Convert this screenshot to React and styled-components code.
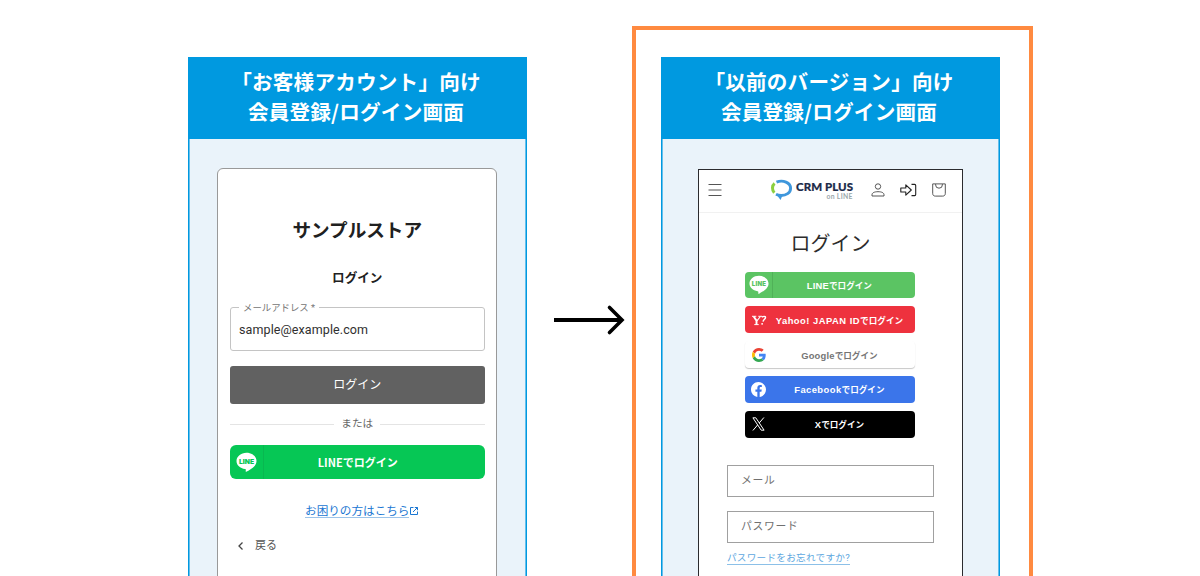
import React from "react";
import styled, { createGlobalStyle } from "styled-components";

const GlobalStyle = createGlobalStyle`
  * {
    box-sizing: border-box;
  }
  body {
    margin: 0;
    background: #ffffff;
    font-family: Roboto, "Noto Sans CJK JP", sans-serif;
  }
`;

const Stage = styled.main`
  display: flex;
  align-items: flex-start;
  width: 1200px;
  height: 576px;
  padding-left: 188px;
  overflow: hidden;
`;

const Panel = styled.section`
  flex: none;
  width: 339px;
  height: 560px;
  margin-top: ${(props) => props.$top}px;
`;

const PanelHeader = styled.h2`
  height: 82px;
  margin: 0;
  padding: 9px 3px 0 0;
  background: #0099e0;
  color: #ffffff;
  font-family: "Noto Sans CJK JP", sans-serif;
  font-size: 20.6px;
  font-weight: 700;
  line-height: 30px;
  letter-spacing: 0.2px;
  text-align: center;
  white-space: nowrap;
`;

const PanelLine = styled.span`
  display: block;
`;

const PanelBody = styled.div`
  display: flex;
  height: 478px;
  padding: ${(props) => props.$padding};
  background: #eaf3fa;
  border: solid #0099e0;
  border-width: 0 1px;
  box-shadow: inset 1px 0 #66bfeb, inset -1px 0 #66bfeb;
`;

const Frame = styled.div`
  flex: none;
  width: 401px;
  height: 620px;
  margin-top: 26px;
  padding-left: 25px;
  border: 4px solid #ff8a40;
`;

const ArrowSlot = styled.div`
  flex: none;
  width: 105px;
  padding: 304px 0 0 27px;
  svg {
    display: block;
  }
`;

/* customer account card */

const AccountCard = styled.div`
  display: flex;
  flex-direction: column;
  width: 280px;
  height: 450px;
  padding: 0 11.5px 0 12px;
  background: #ffffff;
  border: 1px solid #999999;
  border-radius: 6px;
`;

const StoreName = styled.h1`
  margin: 47px 0 0;
  color: #202020;
  font-size: 18.6px;
  font-weight: 700;
  line-height: 30px;
  text-align: center;
`;

const AccountTitle = styled.h3`
  margin: 22px 0 0;
  color: #202020;
  font-size: 12.6px;
  font-weight: 700;
  line-height: 20px;
  text-align: center;
`;

const Field = styled.fieldset`
  height: 50px;
  margin: 13px 0 0;
  padding: 0 8px;
  border: 1px solid #c4c4c4;
  border-radius: 3px;
  min-width: 0;
`;

const FieldLabel = styled.legend`
  padding: 1px 4px 0;
  height: 12px;
  color: #757575;
  font-size: 9.4px;
  line-height: 12px;
`;

const FieldValue = styled.div`
  margin-top: 7px;
  color: #303030;
  font-size: 12.5px;
  line-height: 20px;
  letter-spacing: 0.1px;
`;

const SubmitButton = styled.button`
  flex: none;
  height: 38px;
  margin-top: 15px;
  padding: 0 0 3px;
  background: #616161;
  border: 0;
  border-radius: 3px;
  color: #ffffff;
  font: 400 12px Roboto, "Noto Sans CJK JP", sans-serif;
`;

const Divider = styled.div`
  display: flex;
  align-items: center;
  gap: 7px;
  height: 16px;
  margin-top: 12px;
  color: #666666;
  font-size: 10.6px;
  line-height: 18px;
  &::before,
  &::after {
    content: "";
    flex: 1;
    height: 1px;
    background: #e4e4e4;
  }
`;

const LineButton = styled.button`
  display: flex;
  flex: none;
  align-items: center;
  height: 34px;
  margin-top: 13px;
  padding: 0;
  background: #06c755;
  border: 0;
  border-radius: 6px;
  color: #ffffff;
  font: 700 11px "Noto Sans CJK JP", sans-serif;
`;

const IconCell = styled.span`
  display: flex;
  flex: none;
  align-items: center;
  justify-content: center;
  width: ${(props) => props.$width}px;
  height: 100%;
  border-right: 1px solid ${(props) => props.$rule || "transparent"};
`;

const ButtonText = styled.span`
  flex: 1;
  padding-right: ${(props) => props.$right || 0}px;
  text-align: center;
  white-space: nowrap;
`;

const Kana = styled.span`
  font-size: 8.6px;
  letter-spacing: 0;
`;

const HelpLink = styled.a`
  display: flex;
  align-items: center;
  justify-content: center;
  margin-top: 24px;
  padding-left: 10px;
  color: #1976d2;
  line-height: 16px;
  font-size: 11.6px;
`;

const HelpText = styled.span`
  height: 15px;
  line-height: 17px;
  border-bottom: 1px solid #9cc4ea;
`;

const BackLink = styled.a`
  display: flex;
  align-items: center;
  gap: 10px;
  margin-top: 18px;
  padding-left: 7px;
  color: #555555;
  font-size: 11px;
  line-height: 20px;
`;

/* classic storefront card */

const StoreCard = styled.div`
  width: 265px;
  height: 450px;
  background: #ffffff;
  border: 1px solid #2b2b2e;
`;

const StoreBar = styled.header`
  display: flex;
  align-items: center;
  height: 43px;
  padding: 0 16px 3px 9px;
  border-bottom: 1px solid #f1f1f1;
`;

const Brand = styled.div`
  display: flex;
  margin: 1px 0 0 48px;
`;

const BarIcons = styled.div`
  display: flex;
  align-items: center;
  justify-content: space-between;
  width: 75px;
  margin-left: auto;
`;

const LoginTitle = styled.h1`
  margin: 14px 0 0;
  color: #2c2c2c;
  font-family: "Noto Sans CJK JP", sans-serif;
  font-size: 20px;
  font-weight: 400;
  line-height: 32px;
  text-align: center;
`;

const SocialList = styled.div`
  display: flex;
  flex-direction: column;
  gap: 8.4px;
  width: 170px;
  margin: 12.5px 0 0 46.4px;
`;

const SocialButton = styled.button`
  display: flex;
  align-items: center;
  height: 26.5px;
  padding: 0;
  background: ${(props) => props.$bg};
  border: 0;
  border-radius: 4px;
  box-shadow: ${(props) => props.$shadow || "none"};
  color: ${(props) => props.$color || "#ffffff"};
  font: 700 9.4px "Liberation Sans", "Noto Sans CJK JP", sans-serif;
  letter-spacing: ${(props) => props.$tracking || 0.2}px;
`;

const StoreForm = styled.form`
  display: flex;
  flex-direction: column;
  align-items: flex-start;
  gap: 14px;
  margin: 27px 0 0 28px;
`;

const StoreField = styled.div`
  width: 207px;
  height: 32px;
  padding-left: 13px;
  border: 1px solid #a0a0a0;
  color: #707070;
  font-size: 10.8px;
  line-height: 30px;
  letter-spacing: 0.7px;
`;

const ForgotLink = styled.a`
  height: 15px;
  margin-top: -7px;
  border-bottom: 1px solid #8cc0e8;
  color: #5da7e0;
  font-size: 9.6px;
  line-height: 15px;
  letter-spacing: 0.28px;
`;

function LineIcon({ size, color }) {
  return (
    <svg width={size} height={size} viewBox="0 0 21 21">
      <path
        d="M10.5 .8C4.900 .8.5 4.500.5 9c0 4.100 3.600 7.400 8.500 8.100.9.200.9.500.7 2-.1.700.3.900 1 .5 1.700-.9 6-3.500 7.900-5.700C19.900 12.500 20.500 10.800 20.500 9 20.500 4.500 16.100.8 10.500.8z"
        fill="#ffffff"
      />
      <text
        x="10.5"
        y="11.500"
        textAnchor="middle"
        fontFamily="Inter, sans-serif"
        fontSize="6.600"
        fontWeight="900"
        textLength="15"
        lengthAdjust="spacingAndGlyphs"
        fill={color}
      >
        LINE
      </text>
    </svg>
  );
}

function YahooIcon() {
  return (
    <svg width="18" height="14" viewBox="0 0 18 14" fill="none" stroke="#ffffff">
      <path d="M2 3.300h4.300M8.300 3.300h3.700M4.300 11.600h4.400" strokeWidth="1" />
      <path d="M3.700 3.500 6.500 7.600v4" strokeWidth="1.900" />
      <path d="M10.400 3.500 6.900 7.800" strokeWidth="1.100" />
      <path d="M12 4.400c.8-1.300 3.600-1.500 3.500.2-.1 1.500-2 1.800-2.500 4" strokeWidth="1.400" />
      <path d="M12.300 10.200l-.3 1.500" strokeWidth="1.600" />
    </svg>
  );
}

function GoogleIcon() {
  return (
    <svg width="14" height="14" viewBox="0 0 48 48">
      <path
        fill="#EA4335"
        d="M24 9.500c3.540 0 6.710 1.220 9.210 3.600l6.850-6.850C35.900 2.380 30.470 0 24 0 14.620 0 6.510 5.380 2.560 13.220l7.980 6.190C12.430 13.720 17.740 9.500 24 9.500z"
      />
      <path
        fill="#4285F4"
        d="M46.980 24.550c0-1.570-.15-3.090-.38-4.550H24v9.020h12.940c-.58 2.960-2.260 5.480-4.780 7.180l7.730 6c4.510-4.180 7.090-10.360 7.090-17.650z"
      />
      <path
        fill="#FBBC05"
        d="M10.530 28.590c-.48-1.450-.76-2.990-.76-4.590s.27-3.140.76-4.590l-7.980-6.190C.92 16.460 0 20.120 0 24s.92 7.540 2.560 10.780z"
      />
      <path
        fill="#34A853"
        d="M24 48c6.480 0 11.930-2.130 15.890-5.810l-7.730-6c-2.150 1.450-4.920 2.300-8.160 2.300-6.260 0-11.570-4.220-13.470-9.910l-7.980 6.190C6.510 42.620 14.620 48 24 48z"
      />
    </svg>
  );
}

function FacebookIcon() {
  return (
    <svg width="15" height="15" viewBox="0 0 24 24">
      <path
        fill="#ffffff"
        d="M24 12.070C24 5.440 18.630.07 12 .07S0 5.440 0 12.070c0 5.990 4.390 10.960 10.130 11.860v-8.390H7.080v-3.470h3.050V9.430c0-3.010 1.790-4.670 4.530-4.670 1.310 0 2.690.24 2.690.24v2.950h-1.520c-1.490 0-1.960.93-1.960 1.880v2.240h3.330l-.53 3.470h-2.800v8.390C19.610 23.030 24 18.060 24 12.070z"
      />
    </svg>
  );
}

function XIcon() {
  return (
    <svg width="13" height="14" viewBox="0 0 13 14">
      <path d="M.9.800h2.900l8.300 12.400H9.200z" fill="none" stroke="#ffffff" strokeWidth="1" />
      <path d="M11.900.500 7.200 6M5.600 8 .9 13.500" stroke="#ffffff" strokeWidth="1" />
    </svg>
  );
}

function BrandLogo() {
  return (
    <svg width="84" height="24" viewBox="0 0 84 24">
      <path d="M4.600 5.500C1.900 7.600 1.800 11.900 4.300 14.700" fill="none" stroke="#8ccf3f" strokeWidth="3" />
      <path
        d="M6.500 4.200C13 1.400 20.600 4.700 20.600 10.300c0 4.600-4.600 7.200-9.400 7.200-2 0-3.700-.4-5.200-1.200"
        fill="none"
        stroke="#3f97dc"
        strokeWidth="2.900"
      />
      <path d="M7.200 17.500h5.200L10.600 22z" fill="#3f97dc" />
      <text
        x="26"
        y="12.800"
        fontFamily="Lato, sans-serif"
        fontSize="11.500"
        fontWeight="900"
        textLength="57"
        stroke="#1c2b4a"
        strokeWidth=".2"
        fill="#1c2b4a"
      >
        CRM PLUS
      </text>
      <text x="56.500" y="20.800" fontFamily="Lato, sans-serif" fontSize="6.800" fontWeight="700" textLength="26" fill="#9aa8ab">
        on LINE
      </text>
    </svg>
  );
}

function MenuIcon() {
  return (
    <svg width="14" height="14" viewBox="0 0 14 14">
      <path d="M.5 1.500h13M.5 7h13M.5 12.500h13" stroke="#555555" />
    </svg>
  );
}

function UserIcon() {
  return (
    <svg width="14" height="14" viewBox="0 0 14 14" fill="none" stroke="#444444" strokeWidth=".9">
      <circle cx="7" cy="3.500" r="2.700" />
      <path d="M1 13v-1.200C1 9.700 3.500 8.700 7 8.700s6 1 6 3.100V13z" />
    </svg>
  );
}

function EnterIcon() {
  return (
    <svg width="17" height="14" viewBox="0 0 17 14" fill="none" stroke="#222222" strokeWidth="1.100">
      <path d="M.8 5h5V1.900L11.300 7l-5.500 5.100V9h-5z" strokeLinejoin="round" />
      <path d="M11.500 1.400h3.200c.7 0 1 .3 1 1v9.200c0 .7-.3 1-1 1h-3.200" />
    </svg>
  );
}

function BagIcon() {
  return (
    <svg width="14" height="14" viewBox="0 0 14 14" fill="none" stroke="#444444" strokeWidth=".9">
      <path d="M.7.900h12.600v9.600c0 1.600-1 2.600-2.600 2.600H3.300c-1.600 0-2.600-1-2.600-2.600z" />
      <path d="M3.600 1v.8a3.400 3.400 0 0 0 6.800 0V1" />
    </svg>
  );
}

const socials = [
  { name: "LINE", bg: "#5bc463", rule: "#50b158", icon: <LineIcon size={20} color="#5bc463" /> },
  { name: "Yahoo! JAPAN ID", bg: "#ee323e", tracking: 0.5, icon: <YahooIcon /> },
  {
    name: "Google",
    bg: "#ffffff",
    color: "#757575",
    shadow: "0 1px 1px #c8c8c8",
    icon: <GoogleIcon />,
  },
  { name: "Facebook", bg: "#3b75ea", tracking: 0.45, icon: <FacebookIcon /> },
  { name: "X", bg: "#000000", icon: <XIcon /> },
];

function AccountLogin() {
  return (
    <AccountCard>
      <StoreName>サンプルストア</StoreName>
      <AccountTitle>ログイン</AccountTitle>
      <Field>
        <FieldLabel>メールアドレス *</FieldLabel>
        <FieldValue>sample@example.com</FieldValue>
      </Field>
      <SubmitButton>ログイン</SubmitButton>
      <Divider>または</Divider>
      <LineButton>
        <IconCell $width={34} $rule="#08b850">
          <LineIcon size={21} color="#06c755" />
        </IconCell>
        <ButtonText $right={33}>LINEでログイン</ButtonText>
      </LineButton>
      <HelpLink>
        <HelpText>お困りの方はこちら</HelpText>
        <svg width="10" height="10" viewBox="0 0 10 10" fill="none" stroke="#1976d2">
          <path d="M4.500 1.500h-3v7h7v-3M5.800 1.500h2.700v2.700M8.500 1.500 4 6" />
        </svg>
      </HelpLink>
      <BackLink>
        <svg width="8" height="10" viewBox="0 0 8 10" fill="none" stroke="#444444" strokeWidth="1.300">
          <path d="M5.500 1.500 2 5l3.500 3.500" />
        </svg>
        戻る
      </BackLink>
    </AccountCard>
  );
}

function StoreLogin() {
  return (
    <StoreCard>
      <StoreBar>
        <MenuIcon />
        <Brand>
          <BrandLogo />
        </Brand>
        <BarIcons>
          <UserIcon />
          <EnterIcon />
          <BagIcon />
        </BarIcons>
      </StoreBar>
      <LoginTitle>ログイン</LoginTitle>
      <SocialList>
        {socials.map((item) => (
          <SocialButton
            key={item.name}
            $bg={item.bg}
            $color={item.color}
            $shadow={item.shadow}
            $tracking={item.tracking}
          >
            <IconCell $width={27.5} $rule={item.rule}>
              {item.icon}
            </IconCell>
            <ButtonText $right={9.5}>
              {item.name}
              <Kana>でログイン</Kana>
            </ButtonText>
          </SocialButton>
        ))}
      </SocialList>
      <StoreForm>
        <StoreField>メール</StoreField>
        <StoreField>パスワード</StoreField>
        <ForgotLink>パスワードをお忘れですか?</ForgotLink>
      </StoreForm>
    </StoreCard>
  );
}

function App() {
  return (
    <>
      <GlobalStyle />
      <Stage>
        <Panel $top={57}>
          <PanelHeader>
            <PanelLine>「お客様アカウント」向け</PanelLine>
            <PanelLine>会員登録/ログイン画面</PanelLine>
          </PanelHeader>
          <PanelBody $padding="29px 0 0 28px">
            <AccountLogin />
          </PanelBody>
        </Panel>
        <ArrowSlot>
          <svg width="72" height="32" viewBox="0 0 72 32" fill="none" stroke="#000000" strokeWidth="4">
            <path d="M0 16h68" />
            <path d="M55.500 3.500 68 16 55.500 28.500" strokeLinecap="round" strokeWidth="3.600" />
          </svg>
        </ArrowSlot>
        <Frame>
          <Panel $top={27}>
            <PanelHeader>
              <PanelLine>「以前のバージョン」向け</PanelLine>
              <PanelLine>会員登録/ログイン画面</PanelLine>
            </PanelHeader>
            <PanelBody $padding="30px 0 0 36px">
              <StoreLogin />
            </PanelBody>
          </Panel>
        </Frame>
      </Stage>
    </>
  );
}

export default App;
